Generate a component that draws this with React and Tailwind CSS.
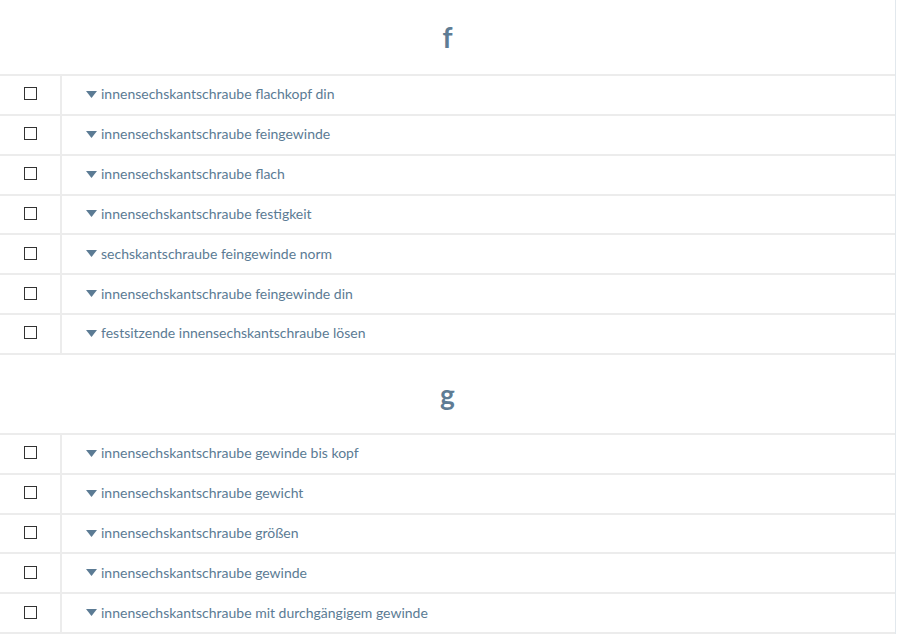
import React from "react";

const groups = [
  {
    letter: "f",
    h: "h-[74px]",
    items: [
      "innensechskantschraube flachkopf din",
      "innensechskantschraube feingewinde",
      "innensechskantschraube flach",
      "innensechskantschraube festigkeit",
      "sechskantschraube feingewinde norm",
      "innensechskantschraube feingewinde din",
      "festsitzende innensechskantschraube lösen",
    ],
  },
  {
    letter: "g",
    h: "h-[78px]",
    items: [
      "innensechskantschraube gewinde bis kopf",
      "innensechskantschraube gewicht",
      "innensechskantschraube größen",
      "innensechskantschraube gewinde",
      "innensechskantschraube mit durchgängigem gewinde",
    ],
  },
];

function Row({ text }) {
  return (
    <div className="flex h-[39.85px] border-t-2 border-[#ececec]">
      <div className="w-[62px] flex items-center justify-center border-r-2 border-[#ececec]">
        <div className="w-[13px] h-[13px] border border-[#333] bg-white mb-[2px]" />
      </div>
      <div className="flex-1 flex items-center pl-[24px] pb-[2px] text-[14px] text-[#5b7b94]">
        <svg width="11" height="8" viewBox="0 0 11 8" className="mr-[4px] mt-[2px]">
          <polygon points="0,0 11,0 5.5,7" fill="#5b7b94" />
        </svg>
        <span>{text}</span>
      </div>
    </div>
  );
}

export default function App() {
  return (
    <div
      className="w-[897px] h-[634px] bg-white overflow-hidden"
      style={{ fontFamily: "Lato, 'Open Sans', sans-serif" }}
    >
      <div className="w-[896px] border-r border-[#e2e8ed] h-full">
        {groups.map((g, gi) => (
          <div key={g.letter} className={gi > 0 ? "border-t-2 border-[#ececec]" : ""}>
            <div className={`${g.h} flex items-center justify-center`}>
              <span className="text-[28px] font-bold text-[#5e7c94] leading-none">{g.letter}</span>
            </div>
            {g.items.map((t) => (
              <Row key={t} text={t} />
            ))}
          </div>
        ))}
        <div className="border-t-2 border-[#ececec]" />
      </div>
    </div>
  );
}
